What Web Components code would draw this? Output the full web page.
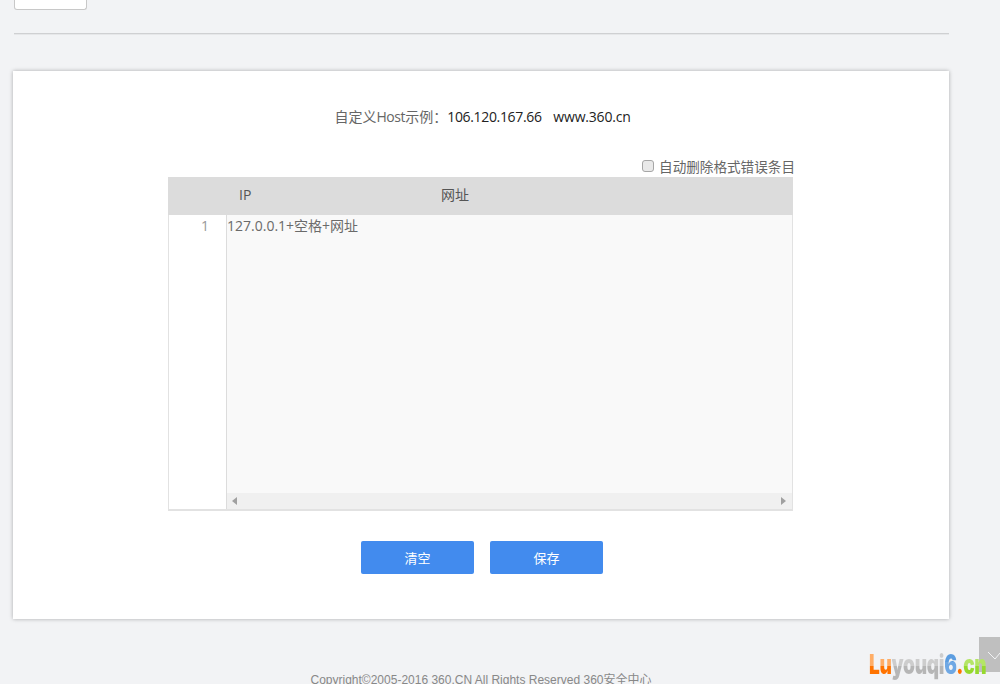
<!DOCTYPE html>
<html lang="zh-CN">
<head>
<meta charset="utf-8">
<title>自定义Host</title>
<style>
  html, body { margin: 0; height: 684px; overflow: hidden; background: #f2f3f5; }
</style>
</head>
<body>
<hosts-page>
  <top-toolbar></top-toolbar>
  <host-card>
    <host-example></host-example>
    <host-editor></host-editor>
    <div slot="actions">
      <app-button>清空</app-button>
      <app-button>保存</app-button>
    </div>
  </host-card>
  <page-footer></page-footer>
</hosts-page>
<scroll-tab></scroll-tab>
<site-mark></site-mark>

<script>
const fontStack = '"Open Sans", "Noto Sans CJK SC", sans-serif';

// contenedor general de la pagina
class HostsPage extends HTMLElement {
  constructor() {
    super();
    this.attachShadow({ mode: "open" }).innerHTML = `
      <style>
        :host { display: flex; flex-direction: column; width: 1000px; height: 684px; overflow: hidden;
          font-family: ${fontStack}; font-size: 14px; color: #666; }
      </style>
      <slot></slot>`;
  }
}

class TopToolbar extends HTMLElement {
  constructor() {
    super();
    this.attachShadow({ mode: "open" }).innerHTML = `
      <style>
        :host { display: block; flex: none; margin: 0 51px 0 14px; height: 71px; box-sizing: border-box; }
        .stub { width: 73px; height: 10px; box-sizing: border-box; background: #fff;
          border: 1px solid #c8c8c8; border-top: 0; border-radius: 0 0 3px 3px; }
        .rule { height: 1px; margin-top: 23px; background: #cfd0d2; box-shadow: 0 1px 0 #e6e7e9; }
      </style>
      <div class="stub"></div>
      <div class="rule"></div>`;
  }
}

class HostCard extends HTMLElement {
  constructor() {
    super();
    this.attachShadow({ mode: "open" }).innerHTML = `
      <style>
        :host { display: block; flex: none; width: 936px; height: 548px; margin-left: 13px; box-sizing: border-box;
          background: #fff; box-shadow: 0 0 4px rgba(0,0,0,.3); padding-top: 34px; }
        ::slotted([slot="actions"]) { display: flex; gap: 16px; margin: 30px 0 0 348px; }
      </style>
      <slot></slot>
      <slot name="actions"></slot>`;
  }
}

class HostExample extends HTMLElement {
  constructor() {
    super();
    this.attachShadow({ mode: "open" }).innerHTML = `
      <style>
        :host { display: block; height: 22px; line-height: 22px; text-align: center; padding-left: 3px; }
        span { white-space: pre; }
        b { font-weight: 400; color: #222; letter-spacing: -.2px; }
        b em { font-style: normal; letter-spacing: -.34px; margin-right: 1.5px; }
        i { font-style: normal; letter-spacing: -.4px; }
        u { text-decoration: none; font-family: "Noto Sans CJK TC", sans-serif; }
      </style>
      <span>自定义<i>Host</i>示例<u>：</u><b><em>106.120.167.66</em>   www.360.cn</b></span>`;
  }
}

class HostEditor extends HTMLElement {
  constructor() {
    super();
    this.attachShadow({ mode: "open" }).innerHTML = `
      <style>
        :host { display: block; width: 625px; margin: 29px 0 0 155px; }
        .option { display: flex; justify-content: flex-end; align-items: center; height: 21px; margin-right: -2px;
          gap: 5px; line-height: 21px; white-space: nowrap; font-size: 13.6px; }
        input { appearance: none; margin: 0 0 2px; width: 12px; height: 12px; box-sizing: border-box;
          background: #e9e9e9; border: 1px solid #a6a6a6; border-radius: 3px; }
        .head { display: flex; height: 38px; line-height: 36px; background: #dcdcdc; color: #555; }
        .head span:first-child { padding-left: 71px; width: 131px; }
        .head span:last-child { margin-left: 71px; }
        .body { display: flex; height: 296px; box-sizing: border-box; border: 1px solid #e2e2e2; border-top: 0; border-bottom-width: 2px; }
        .gutter { width: 58px; flex: none; box-sizing: border-box; padding-right: 17px; text-align: right;
          line-height: 22px; color: #999; background: #fff; border-right: 1px solid #dcdcdc; }
        .pane { flex: 1; display: flex; flex-direction: column; background: #f9f9f9; }
        .text { flex: 1; line-height: 22px; color: #6a6a6a; }
        .bar { display: flex; justify-content: space-between; align-items: center; height: 16px; padding: 0 6px 0 5px;
          background: #f0f0f0; }
        .bar svg { display: block; }
      </style>
      <label class="option"><input type="checkbox"><span>自动删除格式错误条目</span></label>
      <div class="head"><span>IP</span><span>网址</span></div>
      <div class="body">
        <div class="gutter">1</div>
        <div class="pane">
          <div class="text">127.0.0.1+空格+网址</div>
          <div class="bar">
            <svg width="5" height="8" viewBox="0 0 5 8"><path d="M5 0v8L0 4z" fill="#a0a0a0"/></svg>
            <svg width="5" height="8" viewBox="0 0 5 8"><path d="M0 0v8l5-4z" fill="#a0a0a0"/></svg>
          </div>
        </div>
      </div>`;
  }
}

class AppButton extends HTMLElement {
  constructor() {
    super();
    this.attachShadow({ mode: "open" }).innerHTML = `
      <style>
        :host { display: block; }
        button { display: block; width: 113px; height: 33px; padding: 0; border: 0; border-radius: 2px;
          background: #428bee; color: #fff; font: inherit; font-size: 13px; }
      </style>
      <button type="button"><slot></slot></button>`;
  }
}

class PageFooter extends HTMLElement {
  constructor() {
    super();
    this.attachShadow({ mode: "open" }).innerHTML = `
      <style>
        :host { display: block; flex: none; width: 936px; margin: 52px 0 0 13px; text-align: center; line-height: 18px;
          font-family: "Liberation Sans", "Noto Sans CJK SC", sans-serif; font-size: 12px; color: #888; white-space: nowrap; }
      </style>
      Copyright©2005-2016 360.CN All Rights Reserved 360安全中心`;
  }
}

// pestana gris pegada al borde derecho
class ScrollTab extends HTMLElement {
  constructor() {
    super();
    this.attachShadow({ mode: "open" }).innerHTML = `
      <style>
        :host { position: absolute; left: 979px; top: 637px; width: 21px; height: 35px; background: #bfbfbf; }
        svg { display: block; }
      </style>
      <svg width="21" height="35" viewBox="0 0 21 35"><path d="M9 15l7 7 5-6" fill="none" stroke="#f2f3f5" stroke-width="1"/></svg>`;
  }
}

// marca de agua, cada tramo con su degradado
class SiteMark extends HTMLElement {
  constructor() {
    super();
    this.attachShadow({ mode: "open" }).innerHTML = `
      <style>
        :host { position: absolute; left: 869px; top: 651px; height: 28px; line-height: 28px; white-space: nowrap;
          font-family: Inter, "Liberation Sans", sans-serif; font-weight: 900; font-size: 27px; letter-spacing: -.4px; }
        .inner { display: inline-block; transform: scaleX(.706); transform-origin: 0 50%; }
        .inner span { -webkit-background-clip: text; background-clip: text; color: transparent; }
        .lu { background-image: linear-gradient(#ffad66 0 18px, #ff7300 18px); }
        .mid { background-image: linear-gradient(#cdcdcd 0 18px, #b6b6b6 18px); }
        .six { background-image: linear-gradient(#5c9de0 0 14px, #6fa8e4 14px); }
        .dot { background-image: linear-gradient(#ff7300, #ff7300); }
        .cn { background-image: linear-gradient(#b4e566 0 18px, #96d92e 18px); }
      </style>
      <span class="inner"><span class="lu">Lu</span><span class="mid">youqi</span><span class="six">6</span><span class="dot">.</span><span class="cn">cn</span></span>`;
  }
}

customElements.define("hosts-page", HostsPage);
customElements.define("top-toolbar", TopToolbar);
customElements.define("host-card", HostCard);
customElements.define("host-example", HostExample);
customElements.define("host-editor", HostEditor);
customElements.define("app-button", AppButton);
customElements.define("page-footer", PageFooter);
customElements.define("scroll-tab", ScrollTab);
customElements.define("site-mark", SiteMark);
</script>
</body>
</html>
